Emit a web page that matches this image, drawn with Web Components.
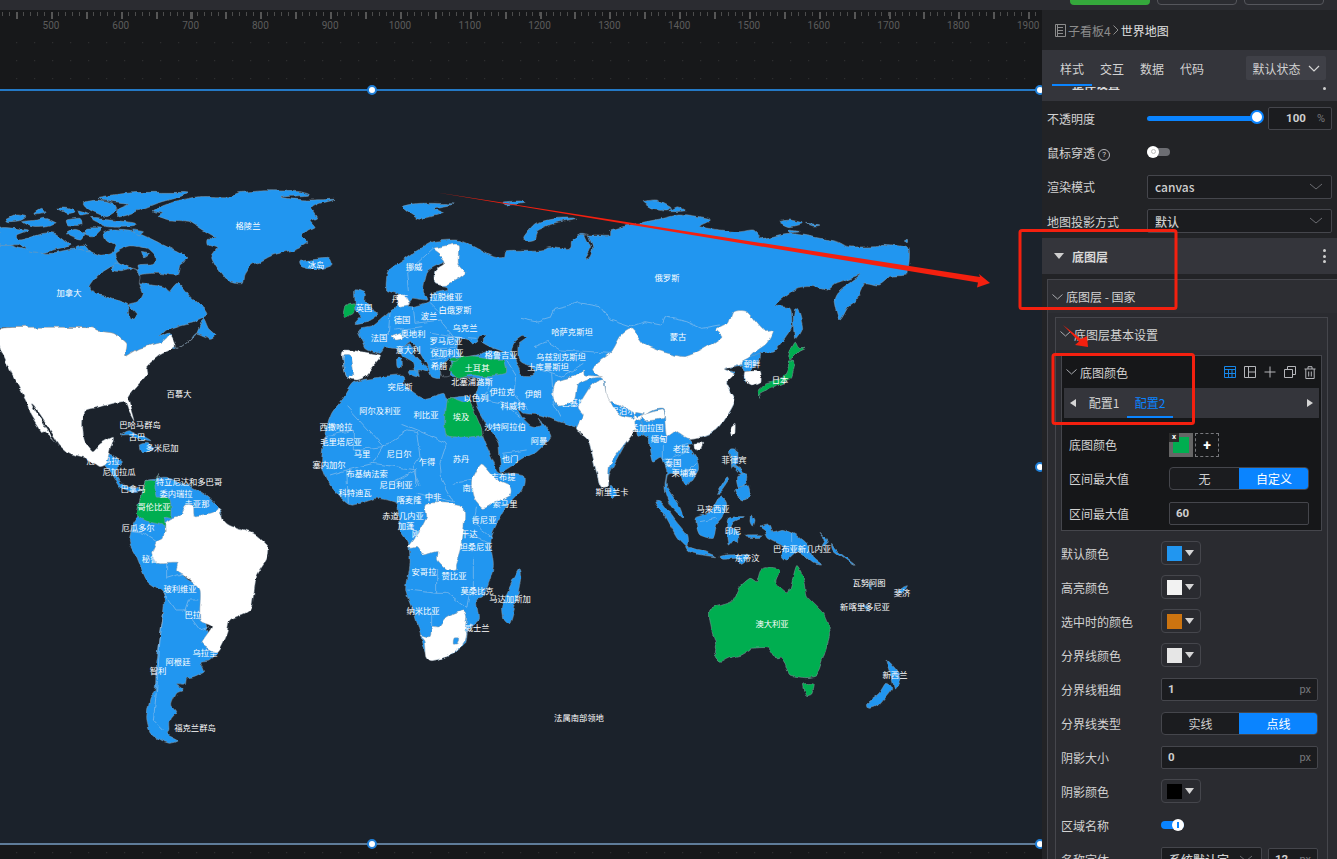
<!DOCTYPE html>
<html lang="zh">
<head>
<meta charset="utf-8">
<title>世界地图</title>
<style>
  html, body { margin: 0; height: 100%; background: #17181a; overflow: hidden; }
  body { font: 12px "Noto Sans CJK SC", "Noto Sans", sans-serif; color: #cfcfcf; }
</style>
</head>
<body>
<editor-app></editor-app>

<script>
// zoomed trace origins: each shape is written in the coordinates of the crop it was read from
const O = { a: [0, 0], b: [1560, 0], c: [0, 1200], d: [1560, 1200], e: [990, 810], f: [930, 1200], g: [1560, 990] };
const toXY = (o, s) => s.trim().split(/\s+/).map(p => {
    const [x, y] = p.split(',').map(Number);
    return [x + O[o][0], y + O[o][1]];
});
const pts = (o, s) => toXY(o, s).map(p => p.join(',')).join(' ');
// closed catmull-rom curve through the traced points, so coasts don't look cut with scissors
const smooth = (o, s) => {
    const P = toXY(o, s), n = P.length;
    let d = `M${P[0][0]} ${P[0][1]}`;
    for (let i = 0; i < n; i++) {
        const a = P[(i - 1 + n) % n], b = P[i], c = P[(i + 1) % n], e = P[(i + 2) % n];
        const k = 0.1;
        d += `C${(b[0] + (c[0] - a[0]) * k).toFixed(1)} ${(b[1] + (c[1] - a[1]) * k).toFixed(1)} ${(c[0] - (e[0] - b[0]) * k).toFixed(1)} ${(c[1] - (e[1] - b[1]) * k).toFixed(1)} ${c[0]} ${c[1]}`;
    }
    return d + 'Z';
};

const BLUE = '#2196f0', DARK = '#1b222b', GREEN = '#00ae50', WHITE = '#ffffff';

const SHAPES = [
    // north america
    [BLUE, 'a', '-5,740 60,745 100,755 150,760 200,750 250,745 300,765 335,760 345,735 320,720 312,700 340,690 400,695 450,715 510,745 563,775 540,795 530,825 470,820 420,825 415,850 490,860 510,875 535,850 570,890 610,925 620,945 580,965 540,975 500,990 480,1010 510,1000 530,1048 570,1020 590,1000 610,955 625,985 645,1005 630,1015 590,1000 570,1020 530,1048 490,1030 420,1045 378,1068 380,1030 340,1000 290,993 265,983 0,982 -5,975'],
    [DARK, 'a', '270,860 295,825 335,800 365,805 405,805 420,830 418,850 430,880 415,905 385,915 412,945 395,955 382,935 385,915 350,900 310,885 285,880'],
    [DARK, 'a', '345,760 390,738 440,745 465,770 460,790 415,795 415,810 360,790'],
    [BLUE, 'a', '345,785 395,805 365,815 340,810'],
    [BLUE, 'a', '425,755 445,760 430,770'],
    [BLUE, 'a', '18,660 50,645 78,650 60,662 25,665'],
    [BLUE, 'a', '65,665 115,660 135,655 170,670 140,680 100,682'],
    [BLUE, 'a', '105,640 125,628 135,640 110,645'],
    [BLUE, 'a', '172,625 200,625 225,635 205,640'],
    [BLUE, 'a', '235,630 265,640 240,645'],
    [BLUE, 'a', '250,608 295,600 340,610 350,630 320,650 270,630'],
    [BLUE, 'a', '295,592 400,578 560,578 540,590 470,610 380,645 350,650 355,625 385,610 340,605'],
    [BLUE, 'a', '270,655 400,668 400,680 320,680'],
    [BLUE, 'a', '200,660 240,655 245,675 205,675'],
    [BLUE, 'a', '0,685 40,685 85,690 50,705 60,720 130,700 165,700 210,735 180,745 120,760 85,755 60,735 0,735'],
    [BLUE, 'a', '200,700 225,688 255,700 245,720 210,710'],
    [BLUE, 'a', '260,685 305,685 280,710 255,705'],
    [BLUE, 'a', '225,740 255,735 270,755 235,750'],
    [BLUE, 'a', '395,690 430,695 415,705'],
    // greenland, iceland, svalbard
    [BLUE, 'a', '460,632 520,605 600,590 690,590 720,578 800,572 900,575 930,585 840,592 920,600 1005,598 960,610 935,625 950,650 930,660 945,680 925,690 905,710 920,730 880,750 820,765 780,785 755,795 735,825 730,850 705,850 680,840 650,800 635,770 650,745 625,735 625,715 650,715 610,690 570,665 510,660 475,650 490,640'],
    [BLUE, 'a', '900,785 930,780 985,775 995,795 950,810 905,800'],
    [BLUE, 'a', '1210,620 1260,610 1360,612 1300,625 1330,640 1265,655 1240,645'],
    // central america, caribbean
    [BLUE, 'c', '320,160 370,185 345,215 370,255 430,270 395,275 360,260 335,220 310,190'],
    [BLUE, 'c', '360,105 385,92 425,110 450,125 420,120 385,105'],
    [BLUE, 'c', '418,135 440,130 462,150 425,155'],
    // usa + mexico
    [WHITE, 'a', '5,985 265,983 290,993 340,1000 380,1030 378,1068 420,1045 490,1025 512,1005 525,1040 480,1065 440,1100 440,1125 400,1170 385,1195 392,1225 402,1262 385,1232 370,1205 300,1220 255,1232 245,1270 250,1320 275,1355 300,1332 340,1312 330,1350 320,1390 300,1400 260,1375 210,1360 170,1325 135,1295 125,1295 90,1240 78,1200 30,1110 0,1040'],
    [DARK, 'a', '98,1222 104,1222 175,1328 168,1328'],
    // south america
    [BLUE, 'c', '465,235 500,232 560,255 610,280 655,320 665,350 600,360 510,360 495,410 555,530 600,560 620,680 640,740 650,760 630,780 600,785 610,815 580,830 560,835 555,855 530,855 550,870 530,880 515,915 530,935 510,960 510,985 505,1005 535,1022 510,1030 480,1020 450,995 440,955 450,895 465,870 470,790 490,640 490,580 440,540 410,470 388,425 400,370 415,345 425,290 440,240'],
    [WHITE, 'c', '515,355 540,345 555,318 580,320 585,350 640,340 655,320 670,360 690,375 760,400 805,440 800,480 770,530 755,620 735,640 690,660 680,700 650,755 605,730 635,680 600,660 600,570 560,530 530,510 530,490 470,490 455,460 470,425 490,415 495,370'],
    [GREEN, 'c', '478,222 465,240 440,240 425,290 412,345 445,365 490,375 495,395 495,350 515,350 512,295 470,290 465,250'],
    // africa
    [BLUE, 'a', '1030,1195 1060,1150 1100,1137 1205,1125 1215,1155 1270,1195 1330,1180 1340,1195 1400,1190 1420,1235 1440,1290 1455,1330 1480,1385 1495,1415 1570,1428 1565,1470 1520,1520 1490,1570 1470,1620 1480,1700 1450,1790 1430,1800 1435,1860 1405,1885 1395,1930 1340,1970 1295,1980 1275,1950 1260,1900 1240,1830 1220,1770 1230,1690 1225,1630 1200,1590 1195,1550 1190,1510 1130,1495 1050,1515 990,1455 965,1390 975,1300 995,1240'],
    [BLUE, 'c', '1555,510 1562,535 1550,600 1530,670 1510,660 1505,620 1525,570'],
    [GREEN, 'e', '350,385 400,395 420,395 435,430 455,495 350,495'],
    [WHITE, 'c', '1282,310 1390,320 1385,440 1370,490 1368,510 1340,510 1310,480 1310,455 1270,465 1250,440 1225,440 1260,390 1280,350'],
    [WHITE, 'c', '1445,192 1490,240 1530,260 1530,285 1480,310 1450,325 1420,290 1415,245'],
    [WHITE, 'c', '1390,632 1400,650 1395,690 1400,700 1390,730 1340,770 1295,782 1280,770 1275,720 1260,705 1290,710 1295,680 1315,680 1340,650'],
    [BLUE, 'c', '1362,712 1376,712 1372,730 1360,732'],
    // eurasia outline
    [BLUE, 'a', '1160,830 1170,810 1240,760 1300,725 1370,720 1400,730 1480,770 1510,772 1520,752 1620,750 1650,740 1710,745 1715,720 1745,700 1765,705 1790,705 1830,705 1835,690 1890,675 1990,655 2040,645 2130,660 2100,680 2210,695 2260,690 2290,715 2370,700 2510,725 2545,740 2630,740 2650,733 2725,745 2725,805 2720,825 2670,830 2635,855 2595,850 2570,900 2545,920 2520,960 2505,900 2520,870 2580,825 2550,835 2505,850 2480,870 2440,860 2390,865 2325,915 2370,925 2375,980 2350,1020 2320,1055 2280,1060 2235,1095 2170,1110 2200,1120 2180,1150 2205,1200 2180,1250 2150,1290 2105,1310 2060,1300 2080,1330 2065,1335 2090,1375 2095,1410 2060,1460 2040,1420 2005,1420 2000,1460 2040,1520 2048,1552 2015,1520 1995,1465 2000,1410 1985,1375 1960,1385 1945,1315 1925,1300 1910,1305 1900,1290 1830,1420 1825,1460 1800,1455 1765,1320 1730,1290 1725,1280 1660,1260 1620,1245 1570,1240 1550,1220 1565,1250 1590,1275 1610,1280 1625,1275 1615,1255 1650,1310 1610,1355 1580,1370 1540,1395 1505,1415 1500,1390 1495,1330 1460,1275 1435,1230 1425,1195 1435,1160 1435,1135 1360,1130 1330,1110 1320,1135 1295,1130 1280,1095 1240,1050 1230,1025 1205,1045 1180,1045 1155,1042 1140,1060 1100,1045 1090,1025 1075,990 1115,980 1135,965 1170,935 1185,925 1195,885 1160,870'],
    [DARK, 'a', '1280,900 1270,870 1285,810 1330,785 1340,790 1305,810 1305,850 1340,860 1345,870 1300,880 1285,905 1240,920 1225,915 1240,895'],
    [DARK, 'e', '390,205 415,210 425,222 440,215 450,200 470,200 455,215 480,230 520,245 495,245 470,245 440,255 395,262 385,240'],
    [DARK, 'e', '575,200 590,205 565,225 565,265 580,280 605,290 610,315 575,315 565,290 545,240 555,215'],
    [DARK, 'e', '355,262 365,280 360,315 340,320 330,290 345,270'],
    [DARK, 'e', '240,215 255,225 290,285 285,300 260,265 235,235'],
    [DARK, 'b', '195,705 205,705 218,745 210,770 195,778 212,745'],
    [BLUE, 'e', '205,235 240,222 250,250 280,285 295,300 285,305 265,300 268,320 258,312 250,280 220,262'],
    [BLUE, 'a', '1190,1075 1202,1075 1204,1102 1192,1102'],
    [BLUE, 'a', '1228,1112 1250,1112 1250,1130 1235,1125'],
    [BLUE, 'b', '15,710 50,670 110,655 170,655 100,670 55,690 45,720 20,725'],
    [BLUE, 'b', '370,605 410,600 450,620 440,630 400,625'],
    [BLUE, 'b', '445,635 470,620 498,632'],
    [BLUE, 'b', '780,665 810,660 850,670 810,680'],
    [BLUE, 'b', '860,670 900,675 880,678'],
    [BLUE, 'b', '805,690 840,695 810,698'],
    [BLUE, 'b', '1153,720 1165,715 1165,725'],
    [BLUE, 'b', '-50,606 0,603 15,610 -40,615'],
    [BLUE, 'b', '825,925 835,930 848,985 825,1020 820,960'],
    [BLUE, 'a', '1065,870 1095,880 1095,905 1115,920 1130,945 1100,965 1065,970 1085,945 1065,930 1065,905'],
    [GREEN, 'a', '1035,920 1062,912 1060,940 1030,952'],
    [WHITE, 'a', '1300,745 1350,735 1375,735 1375,790 1395,820 1340,855 1305,850 1305,810 1335,785 1315,760'],
    [WHITE, 'a', '1190,890 1210,885 1228,910 1205,915 1195,915'],
    [WHITE, 'a', '1032,1050 1140,1065 1120,1100 1095,1130 1070,1140 1040,1130 1030,1090'],
    [BLUE, 'a', '1032,1065 1050,1068 1058,1125 1040,1130 1030,1090'],
    [WHITE, 'e', '183,200 215,190 220,205 195,210'],
    [GREEN, 'e', '385,265 430,258 495,268 520,270 525,312 470,320 425,315 385,325 362,305 365,285'],
    [GREEN, 'e', '360,262 375,260 385,268 375,275 360,270'],
    // asia
    [WHITE, 'b', '335,985 370,1030 410,1050 490,1070 545,1050 605,1010 590,990 625,970 640,935 680,935 730,990 760,990 740,1030 700,1060 670,1090 645,1100 610,1110 640,1125 620,1150 645,1200 620,1250 590,1290 545,1310 505,1315 470,1295 440,1310 430,1230 390,1235 345,1265 260,1200 255,1145 215,1105 270,1060 300,1010'],
    [WHITE, 'g', '215,165 250,150 265,210 350,265 345,300 330,320 270,405 265,470 240,465 205,330 170,300 190,255 175,230'],
    [WHITE, 'g', '370,255 425,240 430,265 375,272'],
    [BLUE, 'g', '275,215 300,225 345,250 340,265 300,255'],
    [BLUE, 'g', '345,270 365,275 370,310 350,318'],
    [BLUE, 'g', '350,245 375,250 355,260'],
    [WHITE, 'g', '190,120 195,135 250,140 215,145 175,165 165,210 110,225 98,190 110,155 155,140'],
    [BLUE, 'g', '665,95 720,70 715,100 680,125 670,120'],
    [WHITE, 'g', '675,125 720,125 722,155 695,165 675,150'],
    [GREEN, 'b', '825,1030 835,1045 855,1045 835,1055 815,1075 805,1070'],
    [GREEN, 'b', '805,1080 825,1085 815,1130 790,1150 740,1170 720,1180 722,1195 712,1172 735,1150 790,1130 805,1100'],
    // indonesia and oceania
    [BLUE, 'd', '272,255 290,280 280,296 268,285'],
    [BLUE, 'd', '405,305 425,305 465,360 500,405 500,440 470,410 440,355'],
    [BLUE, 'd', '498,440 540,450 590,470 545,465 505,455'],
    [BLUE, 'd', '530,350 570,335 600,285 620,310 610,350 590,375 580,415 540,405 530,380'],
    [BLUE, 'd', '625,355 670,350 640,365 630,385 655,400 655,432 640,420 625,435 620,395'],
    [BLUE, 'd', '632,150 650,150 650,190 635,200'],
    [BLUE, 'd', '640,195 665,210 670,230 650,210'],
    [BLUE, 'd', '650,230 680,225 675,255 655,260'],
    [BLUE, 'd', '645,270 680,255 688,290 670,300 650,285'],
    [BLUE, 'd', '590,280 620,232 625,240 605,270'],
    [WHITE, 'd', '630,85 645,70 645,100 635,105'],
    [WHITE, 'd', '525,130 548,130 540,150 528,148'],
    [BLUE, 'd', '720,378 750,372 760,395 790,388 830,405 860,430 880,475 905,495 880,490 850,465 830,455 800,480 785,465 790,440 745,415 735,390'],
    [BLUE, 'd', '695,345 705,360 700,378 693,365'],
    [BLUE, 'd', '680,405 725,405 720,412 685,412'],
    [BLUE, 'd', '600,470 620,465 690,465 665,490 650,475 610,478'],
    [BLUE, 'd', '900,397 925,425 905,440 915,420'],
    [BLUE, 'd', '935,430 950,450 1005,495 985,485 940,450'],
    [GREEN, 'd', '735,503 778,512 768,545 805,578 830,497 855,545 862,590 905,635 925,680 928,710 910,770 890,825 860,833 810,825 795,790 780,770 770,780 745,745 700,745 665,765 625,775 600,787 583,770 590,745 575,690 570,630 635,605 655,565 690,535 710,545 720,515'],
    [GREEN, 'd', '848,853 882,853 875,885 858,888'],
    [BLUE, 'd', '1098,778 1130,810 1140,840 1125,865 1115,835'],
    [BLUE, 'd', '1100,850 1115,865 1075,915 1050,925 1043,910 1080,880'],
    [BLUE, 'd', '1030,610 1050,635 1035,625'],
    [BLUE, 'd', '1130,575 1165,560 1150,580'],
    [BLUE, 'd', '1045,545 1055,565 1048,562']
];

const BORDERS = [
    ['b', '0,955 45,965 95,950 105,925 175,908 240,920 270,960 330,980 375,965 425,975 435,950 500,965 545,985 600,975'],
    ['b', '45,1040 80,1025 120,1050 210,1055 270,1060'],
    ['e', '530,270 560,320 555,370 590,420'],
    ['e', '610,290 700,320 760,280'],
    ['e', '665,310 670,400 690,440'],
    ['e', '445,385 520,400 570,440'],
    ['e', '470,320 480,345 455,395'],
    ['e', '180,125 175,195'],
    ['e', '250,110 255,160'],
    ['e', '255,160 330,150'],
    ['e', '300,100 330,130 400,130'],
    ['e', '330,150 370,200 440,205'],
    ['e', '300,190 370,200 380,235'],
    ['e', '190,180 280,170'],
    ['e', '300,235 380,235'],
    ['e', '300,270 345,262'],
    ['e', '300,70 370,85'],
    ['a', '1300,745 1240,800 1220,815 1225,870'],
    ['f', '110,20 220,140'],
    ['f', '270,70 320,90 410,130'],
    ['f', '220,140 295,90 320,95 330,170 310,200 330,260'],
    ['f', '410,130 390,190 395,240 430,305'],
    ['f', '40,110 130,90 130,150 220,140'],
    ['f', '220,140 190,190 110,210 60,225'],
    ['f', '110,210 115,310'],
    ['f', '320,210 190,190'],
    ['f', '240,250 320,210 320,260'],
    ['f', '430,250 490,240'],
    ['f', '320,280 430,305'],
    ['f', '580,160 650,150'],
    ['c', '1225,570 1310,580 1310,510'],
    ['c', '1310,580 1340,580 1400,625 1410,570'],
    ['c', '1295,640 1295,685'],
    ['c', '1420,470 1420,570 1460,580'],
    ['c', '1390,400 1470,430'],
    ['c', '1430,320 1420,370 1470,410'],
    ['c', '395,395 430,400 470,425'],
    ['c', '500,490 500,535 550,520'],
    ['c', '490,580 525,630 560,630'],
    ['c', '490,640 480,720 470,870 460,960 490,990'],
    ['c', '595,600 565,600 555,630 600,690 630,680'],
    ['g', '430,320 430,390 490,370 510,350'],
    ['g', '440,400 490,440 530,400'],
    ['g', '470,350 505,340'],
    ['d', '540,365 590,355'],
    ['d', '815,400 815,455']
];

const LABELS = [
    ['格陵兰',248,225],['冰岛',316,264],['加拿大',69,292],['挪威',414,266],['丹麦',400,298],['拉脱维亚',446,296],['英国',364,307],['白俄罗斯',455,309],['波兰',429,315],['德国',402,319],['乌克兰',465,327],['奥地利',413,333],['法国',379,337],['罗马尼亚',446,340],['意大利',408,349],['保加利亚',447,352],['格鲁吉亚',501,354],['希腊',439,365],['土耳其',477,367],['北塞浦路斯',472,381],['伊拉克',502,391],['突尼斯',400,386],['百慕大',179,393],['以色列',476,397],
    ['俄罗斯',667,277],['哈萨克斯坦',572,331],['蒙古',678,336],['乌兹别克斯坦',561,356],['土库曼斯坦',548,366],['朝鲜',752,363],['韩国',752,377],['日本',780,379],['伊朗',533,393],
    ['科威特',513,405],['阿尔及利亚',380,410],['利比亚',426,414],['埃及',461,416],['沙特阿拉伯',505,426],['阿曼',539,440],['也门',510,458],['巴基斯坦',578,402],['尼泊尔',623,410],['孟加拉国',647,427],['缅甸',659,438],['老挝',681,448],['泰国',673,462],['柬埔寨',684,472],['菲律宾',734,459],['斯里兰卡',612,491],['马来西亚',713,508],['印尼',733,530],['巴布亚新几内亚',802,548],['东帝汶',747,557],['瓦努阿图',869,582],['斐济',902,592],['新喀里多尼亚',865,606],['澳大利亚',772,623],['新西兰',895,674],['法属南部领地',579,717],
    ['巴哈马群岛',140,424],['古巴',137,436],['多米尼加',162,447],['危地马拉',103,460],['尼加拉瓜',119,471],['巴拿马',133,488],['特立尼达和多巴哥',189,481],['委内瑞拉',176,493],['圭亚那',197,503],['哥伦比亚',154,506],['厄瓜多尔',138,527],['秘鲁',150,558],['玻利维亚',180,588],['巴拉圭',197,614],['乌拉圭',205,652],['阿根廷',178,661],['智利',158,670],['福克兰群岛',195,727],
    ['西撒哈拉',336,426],['毛里塔尼亚',341,441],['马里',362,453],['尼日尔',399,453],['乍得',427,461],['苏丹',461,458],['塞内加尔',329,464],['布基纳法索',367,473],['尼日利亚',396,484],['科特迪瓦',355,492],['中非',433,496],['喀麦隆',409,499],['赤道几内亚',403,515],['加蓬',406,525],['刚果',420,533],['南苏丹',475,487],['吉布提',503,476],['索马里',505,503],['肯尼亚',484,519],['乌干达',465,533],['坦桑尼亚',476,546],['安哥拉',424,571],['赞比亚',454,575],['莫桑比克',477,590],['马达加斯加',510,598],['纳米比亚',423,610],['斯威士兰',473,627]
];

class EditorTopbar extends HTMLElement {
    constructor() {
        super();
        this.attachShadow({ mode: 'open' }).innerHTML = `
            <style>
                :host { display: flex; height: 10px; background: #2b2c31; overflow: hidden; justify-content: flex-end; align-items: flex-end; box-sizing: border-box; }
                div { display: flex; gap: 7px; width: 267px; height: 5px; margin-bottom: 5px; }
                i { display: block; width: 80px; height: 24px; margin-top: -19px; border: 1px solid #55565c; border-radius: 4px; box-sizing: border-box; }
                i.go { background: #35a83c; border: 0; }
            </style>
            <div><i class="go"></i><i></i><i></i></div>
        `;
    }
}
customElements.define('editor-topbar', EditorTopbar);

class CanvasRuler extends HTMLElement {
    constructor() {
        super();
        let nums = '';
        for (let n = 500; n <= 1900; n += 100) nums += `<b>${n}</b>`;
        this.attachShadow({ mode: 'open' }).innerHTML = `
            <style>
                :host {
                    display: flex; height: 26px; padding: 2px 0 0 16.1px; box-sizing: border-box; overflow: hidden;
                    background:
                        repeating-linear-gradient(90deg, #565656 0 2px, transparent 2px 34.9px) 15.9px 2px / 100% 7px no-repeat,
                        repeating-linear-gradient(90deg, #4c4c4c 0 1px, transparent 1px 6.98px) 2px 2px / 100% 4px no-repeat;
                }
                b { flex: 0 0 69.8px; text-align: center; font: 400 10px/10px Roboto, sans-serif; color: #5c5c5c; margin-top: 9px; }
            </style>
            ${nums}
        `;
    }
}
customElements.define('canvas-ruler', CanvasRuler);

class WorldMap extends HTMLElement {
    constructor() {
        super();
        const shapes = SHAPES.map(s => `<path fill="${s[0]}" d="${smooth(s[1], s[2])}"/>`).join('');
        const lines = BORDERS.map(b => `<polyline points="${pts(b[0], b[1])}"/>`).join('');
        const labels = LABELS.map(l => `<text x="${l[1]}" y="${l[2]}">${l[0]}</text>`).join('');
        this.attachShadow({ mode: 'open' }).innerHTML = `
            <style>
                :host { display: block; position: relative; height: 756px; background: ${DARK}; border-top: 2px solid #2479c6; border-bottom: 2px solid #5f7c99; box-sizing: border-box; }
                svg { display: block; width: 1042px; height: 752px; }
                .land path { stroke: #8d9aa6; stroke-width: .5; vector-effect: non-scaling-stroke; }
                .edge polyline { fill: none; stroke: #9cc4ea; stroke-width: .6; vector-effect: non-scaling-stroke; }
                text { font: 8.3px "Noto Sans CJK SC", sans-serif; fill: #fff; text-anchor: middle; dominant-baseline: central; }
                i { position: absolute; width: 6px; height: 6px; border-radius: 50%; background: #fff; border: 2px solid #1f7fd8; }
                .a { left: 367px; top: -6px; }
                .b { left: 367px; bottom: -6px; }
                .c { left: 1035px; top: 371px; }
                .d { left: 1035px; top: -6px; }
                .e { left: 1035px; bottom: -6px; }
            </style>
            <svg viewBox="0 91 1042 752">
                <filter id="coast" filterUnits="userSpaceOnUse" x="0" y="91" width="1042" height="752" color-interpolation-filters="sRGB">
                    <feTurbulence type="fractalNoise" baseFrequency=".09" numOctaves="3" seed="4"/>
                    <feDisplacementMap in="SourceGraphic" scale="5" xChannelSelector="R" yChannelSelector="G"/>
                </filter>
                <g filter="url(#coast)">
                    <g transform="scale(.33333)">
                        <g class="land">${shapes}</g>
                        <g class="edge">${lines}</g>
                    </g>
                </g>
                ${labels}
            </svg>
            <i class="a"></i><i class="b"></i><i class="c"></i><i class="d"></i><i class="e"></i>
        `;
    }
}
customElements.define('world-map', WorldMap);

class CanvasStage extends HTMLElement {
    constructor() {
        super();
        this.attachShadow({ mode: 'open' }).innerHTML = `
            <style>
                :host {
                    display: block; flex: 0 0 1042px; height: 849px; overflow: hidden; position: relative;
                    background-color: #17181a;
                }
                .stage {
                    height: 823px; padding-top: 53px; box-sizing: border-box;
                    background: radial-gradient(circle at .5px .5px, #3a3a3a .8px, transparent 1px) 16.2px 6.2px / 18px 18px;
                }
            </style>
            <canvas-ruler></canvas-ruler>
            <div class="stage"><world-map></world-map></div>
        `;
    }
}
customElements.define('canvas-stage', CanvasStage);

class PropRow extends HTMLElement {
    constructor() {
        super();
        this.attachShadow({ mode: 'open' }).innerHTML = `
            <style>
                :host { display: flex; align-items: center; height: var(--row-h, 34px); padding: 0 var(--row-r, 9px) 0 var(--row-l, 5px); font-size: 12px; color: #d2d2d2; white-space: nowrap; }
                .l { flex: 0 0 100px; }
                .c { flex: 1; display: flex; align-items: center; gap: 6px; min-width: 0; }
            </style>
            <span class="l"><slot name="label"></slot>${this.getAttribute('label') || ''}</span>
            <div class="c"><slot></slot></div>
        `;
    }
}
customElements.define('prop-row', PropRow);

class SelectBox extends HTMLElement {
    constructor() {
        super();
        this.attachShadow({ mode: 'open' }).innerHTML = `
            <style>
                :host { display: flex; flex: 1; align-items: center; height: 24px; box-sizing: border-box; border: 1px solid #45464c; border-radius: 2px; background: #1b1c1f; padding: 0 7px; font-size: 12px; color: #cfcfcf; min-width: 0; }
                span { flex: 1; font-weight: 500; white-space: nowrap; overflow: hidden; }
            </style>
            <span><slot></slot></span>
            <svg width="16" height="8" viewBox="0 0 16 8"><path d="M2 1l6 5 6-5" fill="none" stroke="#6b6c71"/></svg>
        `;
    }
}
customElements.define('select-box', SelectBox);

class NumInput extends HTMLElement {
    constructor() {
        super();
        const unit = this.getAttribute('unit') || '';
        this.attachShadow({ mode: 'open' }).innerHTML = `
            <style>
                :host { display: flex; flex: 1; align-items: center; height: 23px; box-sizing: border-box; border: 1px solid #45464c; border-radius: 2px; background: #1b1c1f; padding: 0 6px; font: 700 11.5px Roboto, sans-serif; color: #cfcfcf; }
                span { flex: 1; text-align: var(--num-align, left); }
                em { font: 11px Roboto, sans-serif; color: #77787c; }
            </style>
            <span><slot></slot></span><em>${unit}</em>
        `;
    }
}
customElements.define('num-input', NumInput);

class SegSwitch extends HTMLElement {
    constructor() {
        super();
        this.attachShadow({ mode: 'open' }).innerHTML = `
            <style>
                :host { display: flex; flex: 1; height: 23px; box-sizing: border-box; border: 1px solid #45464c; border-radius: 4px; overflow: hidden; font-size: 12px; color: #cfcfcf; background: #1b1c1f; }
                span { flex: 0 0 var(--seg-w, 69px); display: flex; align-items: center; justify-content: center; }
                span + span { flex: 1; background: #0a84ff; color: #fff; margin: -1px -1px -1px 0; }
            </style>
            <span>${this.getAttribute('a')}</span><span>${this.getAttribute('b')}</span>
        `;
    }
}
customElements.define('seg-switch', SegSwitch);

class ColorBtn extends HTMLElement {
    constructor() {
        super();
        this.attachShadow({ mode: 'open' }).innerHTML = `
            <style>
                :host { display: flex; align-items: center; width: 40px; height: 24px; box-sizing: border-box; border: 1px solid #45464c; border-radius: 4px; padding-left: 5px; gap: 3px; }
                i { width: 15px; height: 15px; background: ${this.getAttribute('color')}; }
                svg { display: block; }
            </style>
            <i></i>
            <svg width="9" height="6" viewBox="0 0 9 6"><path d="M0 0h9L4.5 6z" fill="#d5d5d5"/></svg>
        `;
    }
}
customElements.define('color-btn', ColorBtn);

class ToggleSw extends HTMLElement {
    constructor() {
        super();
        const on = this.hasAttribute('on');
        this.attachShadow({ mode: 'open' }).innerHTML = `
            <style>
                :host { display: block; position: relative; width: 23px; height: 8px; border-radius: 4px; background: ${on ? '#0a84ff' : '#6c6d72'}; }
                i { position: absolute; top: -2.5px; ${on ? 'right: 0' : 'left: 0'}; width: 12px; height: 12px; border-radius: 50%; background: #fff; }
                i::after { content: ""; position: absolute; left: ${on ? '5px' : '3.5px'}; top: ${on ? '3px' : '3.5px'}; width: ${on ? '1.5px' : '5px'}; height: ${on ? '6px' : '5px'}; border-radius: ${on ? '0' : '50%'}; ${on ? 'background: #0a84ff' : 'border: 1px solid #bbb; box-sizing: border-box'}; }
            </style>
            <i></i>
        `;
    }
}
customElements.define('toggle-sw', ToggleSw);

class RangeBar extends HTMLElement {
    constructor() {
        super();
        this.attachShadow({ mode: 'open' }).innerHTML = `
            <style>
                :host { display: block; position: relative; width: 111px; height: 5px; margin-right: 4px; border-radius: 3px; background: #0a84ff; }
                i { position: absolute; right: -6px; top: -4.5px; width: 10px; height: 10px; box-sizing: content-box; border: 2px solid #0a84ff; border-radius: 50%; background: #fff; margin: -1px 0 0; }
            </style>
            <i></i>
        `;
    }
}
customElements.define('range-bar', RangeBar);

class SectionHead extends HTMLElement {
    constructor() {
        super();
        this.attachShadow({ mode: 'open' }).innerHTML = `
            <style>
                :host { display: flex; align-items: center; height: 36px; background: #34353b; padding: 0 11px 0 12px; font-size: 12px; font-weight: 700; color: #d8d8d8; box-sizing: border-box; }
                span { flex: 1; margin-left: 8px; }
                b { width: 3px; display: flex; flex-direction: column; gap: 2.5px; }
                b i { width: 3px; height: 3px; border-radius: 50%; background: #cfcfcf; }
            </style>
            <svg width="10" height="6" viewBox="0 0 10 6"><path d="M0 0h10L5 6z" fill="#cfcfcf"/></svg>
            <span><slot></slot></span>
            <b><i></i><i></i><i></i></b>
        `;
    }
}
customElements.define('section-head', SectionHead);

class FoldBox extends HTMLElement {
    constructor() {
        super();
        this.attachShadow({ mode: 'open' }).innerHTML = `
            <style>
                :host { display: block; border: 1px solid #45464c; box-sizing: border-box; background: var(--box-bg, #222326); }
                header { display: flex; align-items: center; height: var(--head-h, 32px); background: var(--head-bg, #2f3035); padding: 0 5px 0 var(--head-l, 8px); font-size: 12px; color: #d2d2d2; gap: 3px; }
                header span { flex: 1; }
                svg { flex: none; }
            </style>
            <header>
                <svg width="11" height="6" viewBox="0 0 11 6"><path d="M.5.5l5 4.5 5-4.5" fill="none" stroke="#a9aaae"/></svg>
                <span>${this.getAttribute('label')}</span>
                <slot name="tools"></slot>
            </header>
            <slot></slot>
        `;
    }
}
customElements.define('fold-box', FoldBox);

class ConfigTabs extends HTMLElement {
    constructor() {
        super();
        this.attachShadow({ mode: 'open' }).innerHTML = `
            <style>
                :host { display: flex; align-items: center; height: 30px; margin: 0 2px; background: #34353b; padding: 0 6px; font-size: 12px; color: #d2d2d2; position: relative; }
                svg { display: block; }
                span { width: 46px; text-align: center; height: 30px; line-height: 29px; box-sizing: border-box; }
                .first { margin-left: 5px; }
                .on { color: #0a84ff; border-bottom: 2px solid #0a84ff; }
                .fill { flex: 1; }
            </style>
            <svg width="6" height="8" viewBox="0 0 6 8"><path d="M6 0v8L0 4z" fill="#d5d5d5"/></svg>
            <span class="first">配置1</span><span class="on">配置2</span>
            <div class="fill"></div>
            <svg width="6" height="8" viewBox="0 0 6 8"><path d="M0 0v8l6-4z" fill="#d5d5d5"/></svg>
        `;
    }
}
customElements.define('config-tabs', ConfigTabs);

class ToolIcons extends HTMLElement {
    constructor() {
        super();
        this.attachShadow({ mode: 'open' }).innerHTML = `
            <style>
                :host { display: flex; gap: 8px; align-items: center; }
                svg { display: block; fill: none; stroke: #b5b6ba; }
                .on { stroke: #1787e8; }
            </style>
            <svg class="on" width="12" height="12" viewBox="0 0 12 12"><path d="M.5.5h11v11H.5zM.5 3.500h11M.5 7.500h11M4.500 3.500v8M8 3.500v8" /></svg>
            <svg width="12" height="12" viewBox="0 0 12 12"><path d="M.5.5h11v11H.5zM4.500.5v11M4.500 6h7"/></svg>
            <svg width="12" height="12" viewBox="0 0 12 12"><path d="M6 .5v11M.5 6h11"/></svg>
            <svg width="12" height="12" viewBox="0 0 12 12"><path d="M3.500 3V.5h8v8H9M.5 3.500h8v8h-8z"/></svg>
            <svg width="12" height="13" viewBox="0 0 12 13"><path d="M.5 3h11M4 3V.7h4V3M1.800 3v9.500h8.400V3M4.700 5.500v5M7.300 5.500v5"/></svg>
        `;
    }
}
customElements.define('tool-icons', ToolIcons);

class FillPicker extends HTMLElement {
    constructor() {
        super();
        this.attachShadow({ mode: 'open' }).innerHTML = `
            <style>
                :host { display: flex; gap: 2px; }
                .sw { position: relative; width: 24px; height: 24px; background: #666; display: flex; align-items: center; justify-content: center; }
                .sw i { width: 16px; height: 16px; background: ${GREEN}; }
                .sw b { position: absolute; left: 0; top: 0; width: 10px; height: 9px; background: #2a2a2a; color: #fff; font: 700 8px/8px Roboto, sans-serif; text-align: center; }
                .add { width: 24px; height: 24px; box-sizing: border-box; border: 1px dashed #77787c; color: #fff; display: flex; align-items: center; justify-content: center; font: 700 14px Roboto, sans-serif; }
            </style>
            <div class="sw"><i></i><b>x</b></div>
            <div class="add">+</div>
        `;
    }
}
customElements.define('fill-picker', FillPicker);

class PropPanel extends HTMLElement {
    constructor() {
        super();
        this.attachShadow({ mode: 'open' }).innerHTML = `
            <style>
                :host { display: flex; flex-direction: column; flex: 0 0 295px; height: 849px; background: #222326; overflow: hidden; font-size: 12px; color: #d2d2d2; }
                .crumb { display: flex; align-items: center; height: 40px; padding-left: 13px; flex: none; gap: 2px; color: #8c8c8c; }
                .crumb em { font-style: normal; color: #e0e0e0; }
                .tabs { display: flex; align-items: center; flex: none; height: 37px; padding: 0 11px 1px 18px; box-sizing: border-box; background: #34353b; gap: 16px; position: relative; }
                .tabs .t { flex: none; }
                .tabs u { position: absolute; left: 10px; bottom: 1px; width: 40px; height: 2px; background: #0a84ff; }
                .state { margin-left: auto; width: 80px; height: 24px; background: #3f4047; border-radius: 2px; display: flex; align-items: center; gap: 7px; justify-content: center; }
                .body { flex: 1; overflow: hidden; }
                .top { margin-top: -22px; }
                .box1 { --box-bg: #2a2b30; --head-bg: #2d2e33; --head-h: 33px; --head-l: 4px; margin: 5px -2px 0 5px; border-right: 0; }
                .box2 { --head-h: 32px; --head-l: 4px; margin: 4px 11px 0 7px; border-bottom: 0; }
                .box3 { --box-bg: #161719; --head-bg: #161719; --head-l: 4px; --row-l: 7px; --row-r: 12px; --row-h: 34.4px; margin: 5px 5px 0; }
                .box3 .rows { padding: 9px 0 0; }
                .rest { margin-top: 5px; --row-l: 5px; --row-r: 9px; }
                .rest seg-switch { --seg-w: 77px; }
                .top-rows { --row-h: 34.34px; --row-r: 5px; }
                .help { display: inline-block; width: 10px; height: 10px; border: 1px solid #b5b6ba; border-radius: 50%; font: 8px/10px Roboto, sans-serif; text-align: center; margin-left: 3px; vertical-align: 1px; }
                .num100 { --num-align: center; width: 64px; flex: none; }
                .num-size { width: 50px; flex: none; }
            </style>
            <div class="crumb">
                <svg width="11" height="13" viewBox="0 0 11 13"><path d="M.5.5h10v12H.5zM3 3.500h5M3 6.500h5M3 9.500h5M2.500.5v12" fill="none" stroke="#8c8c8c"/></svg>
                <span>子看板4</span>
                <svg width="6" height="10" viewBox="0 0 6 10"><path d="M.5.5L5 5 .5 9.500" fill="none" stroke="#8c8c8c"/></svg>
                <em>世界地图</em>
            </div>
            <div class="tabs">
                <span class="t">样式</span><span class="t">交互</span><span class="t">数据</span><span class="t">代码</span>
                <u></u>
                <div class="state">默认状态
                    <svg width="12" height="7" viewBox="0 0 12 7"><path d="M1 1l5 5 5-5" fill="none" stroke="#d5d5d5" stroke-width="1.2"/></svg>
                </div>
            </div>
            <div class="body">
                <section-head class="top">整体设置</section-head>
                <div class="top-rows">
                    <prop-row label="不透明度"><range-bar></range-bar><num-input class="num100" unit="%">100</num-input></prop-row>
                    <prop-row><span slot="label">鼠标穿透<i class="help">?</i></span><toggle-sw></toggle-sw></prop-row>
                    <prop-row label="渲染模式"><select-box>canvas</select-box></prop-row>
                    <prop-row label="地图投影方式"><select-box>默认</select-box></prop-row>
                </div>
                <section-head>底图层</section-head>
                <fold-box class="box1" label="底图层 - 国家">
                    <fold-box class="box2" label="底图层基本设置">
                        <fold-box class="box3" label="底图颜色">
                            <tool-icons slot="tools"></tool-icons>
                            <config-tabs></config-tabs>
                            <div class="rows">
                                <prop-row label="底图颜色"><fill-picker></fill-picker></prop-row>
                                <prop-row label="区间最大值"><seg-switch a="无" b="自定义"></seg-switch></prop-row>
                                <prop-row label="区间最大值"><num-input>60</num-input></prop-row>
                            </div>
                        </fold-box>
                        <div class="rest">
                            <prop-row label="默认颜色"><color-btn color="#2196f0"></color-btn></prop-row>
                            <prop-row label="高亮颜色"><color-btn color="#f2f2f2"></color-btn></prop-row>
                            <prop-row label="选中时的颜色"><color-btn color="#cc7410"></color-btn></prop-row>
                            <prop-row label="分界线颜色"><color-btn color="#e6e6e6"></color-btn></prop-row>
                            <prop-row label="分界线粗细"><num-input unit="px">1</num-input></prop-row>
                            <prop-row label="分界线类型"><seg-switch a="实线" b="点线"></seg-switch></prop-row>
                            <prop-row label="阴影大小"><num-input unit="px">0</num-input></prop-row>
                            <prop-row label="阴影颜色"><color-btn color="#000000"></color-btn></prop-row>
                            <prop-row label="区域名称"><toggle-sw on></toggle-sw></prop-row>
                            <prop-row label="名称字体"><select-box>系统默认字</select-box><num-input class="num-size" unit="px">12</num-input></prop-row>
                        </div>
                    </fold-box>
                </fold-box>
            </div>
        `;
    }
}
customElements.define('prop-panel', PropPanel);

// red marks someone drew on the screenshot, they lie over everything
class ReviewMarks extends HTMLElement {
    constructor() {
        super();
        this.attachShadow({ mode: 'open' }).innerHTML = `
            <style>
                :host { position: absolute; left: 0; top: 0; width: 1337px; height: 859px; pointer-events: none; }
                svg { display: block; }
            </style>
            <svg width="1337" height="859" viewBox="0 0 1337 859">
                <path d="M437 192.500L980 277 979 274 990 283 977 287.500 978 282.500z" fill="#f4200f"/>
                <rect x="1020" y="230.500" width="156" height="78" rx="2" fill="none" stroke="#f4200f" stroke-width="3"/>
                <rect x="1053" y="354.500" width="140.500" height="69" rx="2" fill="none" stroke="#f4200f" stroke-width="3"/>
                <path d="M1063 325L1081 339 1087 336 1088 347 1075 345 1079 341.500z" fill="#f4200f"/>
            </svg>
        `;
    }
}
customElements.define('review-marks', ReviewMarks);

class EditorApp extends HTMLElement {
    constructor() {
        super();
        this.attachShadow({ mode: 'open' }).innerHTML = `
            <style>
                :host { display: block; position: relative; width: 1337px; height: 859px; overflow: hidden; }
                main { display: flex; }
            </style>
            <editor-topbar></editor-topbar>
            <main>
                <canvas-stage></canvas-stage>
                <prop-panel></prop-panel>
            </main>
            <review-marks></review-marks>
        `;
    }
}
customElements.define('editor-app', EditorApp);
</script>
</body>
</html>
